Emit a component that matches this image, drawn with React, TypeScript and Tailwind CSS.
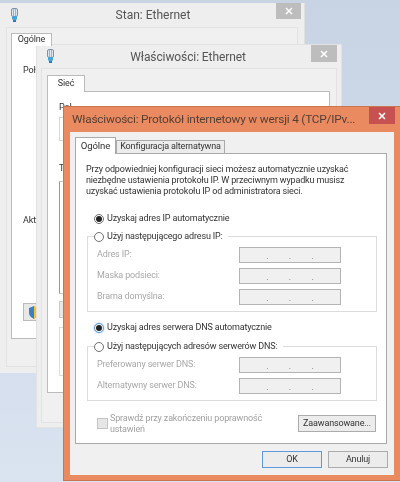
import React from "react";

const font = { fontFamily: 'Roboto, "Liberation Sans", sans-serif' };

function Plug({ className }: { className: string }) {
  return (
    <svg className={className} width="9" height="14" viewBox="0 0 9 14">
      <rect x="1.5" y="0.5" width="6" height="8" rx="1.5" fill="#dbe6ee" stroke="#7d93a6" />
      <rect x="3" y="1" width="1" height="7" fill="#9fb4c4" />
      <rect x="5" y="1" width="1" height="7" fill="#9fb4c4" />
      <rect x="2" y="8.5" width="5" height="3" fill="#3fa4e0" />
      <rect x="3" y="11.5" width="3" height="2.5" fill="#1c7fc4" />
    </svg>
  );
}

function CloseX({ className }: { className: string }) {
  return (
    <div className={className}>
      <svg width="8" height="8" viewBox="0 0 8 8">
        <path d="M1 1 L7 7 M7 1 L1 7" stroke="#ffffff" strokeWidth="1.6" />
      </svg>
    </div>
  );
}

function Radio({ on, active }: { on?: boolean; active?: boolean }) {
  return (
    <span
      className={`flex h-[10px] w-[10px] shrink-0 items-center justify-center rounded-full border bg-white ${
        active ? "border-[#5a9bd8] shadow-[0_0_2px_#7fb8ea]" : "border-[#6f6f6f]"
      }`}
    >
      {on ? <span className="h-[6px] w-[6px] rounded-full bg-[#222]" /> : null}
    </span>
  );
}

function IpRow({ label }: { label: string }) {
  return (
    <div className="flex h-[16px] items-center">
      <span className="w-[142px] whitespace-nowrap text-[#a8a8a8]">{label}</span>
      <div className="flex h-[16px] w-[102px] items-end justify-around border border-[#b4b4b4] bg-[#f0f0f0] px-[16px] pb-[2px] text-[#777] leading-[8px]">
        <span>.</span>
        <span>.</span>
        <span>.</span>
      </div>
    </div>
  );
}

export default function App() {
  return (
    <div
      className="relative h-[482px] w-[400px] overflow-hidden bg-gradient-to-b from-[#c8d3e4] to-[#dae3f0] text-[9px] tracking-[-0.15px] text-[#333] blur-[0.4px]"
      style={font}
    >
      {/* Stan: Ethernet */}
      <div className="absolute left-0 top-[3px] flex h-[370px] w-[305px] flex-col border-r border-[#e0e0e0] bg-[#eeeeee] px-[6px] pb-[6px]">
        <div className="flex h-[24px] shrink-0 items-center justify-center pl-[2px] text-[12px] tracking-normal text-[#555]">
          Stan: Ethernet
        </div>
        <Plug className="absolute left-[10px] top-[5px]" />
        <CloseX className="absolute left-[276px] top-0 flex h-[16px] w-[25px] items-center justify-center bg-[#bdbdbd]" />
        <div className="flex flex-1 flex-col border border-[#e2e2e2] bg-[#f0f0f0] px-[4px] pt-[5px]">
          <div className="z-10 -mb-px flex h-[13px] w-[41px] items-center justify-center border border-b-0 border-[#bbb] bg-white text-[#333]">
            Ogólne
          </div>
          <div className="flex h-[294px] flex-col border border-[#bbb] bg-white pl-[11px]">
            <span className="mt-[18px]">Poł</span>
            <span className="mt-[136px]">Akt</span>
            <div className="mt-[76px] flex h-[18px] w-[40px] items-center border border-[#bbb] bg-[#e8e8e8] pl-[5px]">
              <svg width="10" height="13" viewBox="0 0 10 13">
                <path d="M5 0 L10 2 V7 C10 10 7 12 5 13 Z" fill="#f2c531" />
                <path d="M5 0 L0 2 V7 C0 10 3 12 5 13 Z" fill="#3c7fc8" />
              </svg>
            </div>
          </div>
        </div>
      </div>

      {/* Właściwości: Ethernet */}
      <div className="absolute left-[36px] top-[44px] flex h-[384px] w-[306px] flex-col border border-[#e2e2e2] bg-[#eeeeee] px-[4px] pb-[4px]">
        <div className="flex h-[23px] shrink-0 items-center justify-center pr-[2px] text-[12px] tracking-[-0.1px] text-[#555]">
          Właściwości: Ethernet
        </div>
        <Plug className="absolute left-[9px] top-[4px]" />
        <CloseX className="absolute left-[274px] top-0 flex h-[17px] w-[26px] items-center justify-center bg-[#bdbdbd]" />
        <div className="flex flex-1 flex-col border border-[#e2e2e2] bg-[#f0f0f0] pl-[5px] pr-[6px] pt-[6px]">
          <div className="z-10 -mb-px flex h-[17px] w-[38px] items-center justify-center border border-b-0 border-[#bbb] bg-white">
            Sieć
          </div>
          <div className="flex h-[302px] flex-col border border-[#bbb] bg-white pl-[11px]">
            <span className="mt-[9px] h-[13px] whitespace-nowrap">Poł</span>
            <div className="mt-[3px] h-[24px] w-[250px] border border-[#d8d8d8]" />
            <span className="mt-[21px] h-[13px]">T</span>
            <div className="mt-[6px] h-[113px] w-[250px] border border-[#d0d0d0] border-l-[#999]" />
            <div className="mt-[7px] h-[17px] w-[60px] border border-[#ccc] bg-[#e8e8e8]" />
            <div className="mt-[9px] h-[49px] w-[250px] border border-[#ddd]" />
          </div>
        </div>
      </div>

      {/* Właściwości: Protokół */}
      <div className="absolute left-[63px] top-[106px] flex h-[375px] w-[337px] flex-col border border-[#c9764f] border-r-0 bg-[#e98a60] pb-[5px] pl-[6px] pr-[6px]">
        <div className="flex h-[25px] shrink-0 items-center whitespace-nowrap pl-[2px] text-[11.8px] tracking-[-0.2px] text-[#553f35]">
          Właściwości: Protokół internetowy w wersji 4 (TCP/IPv...
        </div>
        <CloseX className="absolute left-[305px] top-0 flex h-[17px] w-[26px] items-center justify-center bg-[#c75050]" />
        <div className="flex flex-1 flex-col bg-[#f0f0f0] pl-[5px] pr-[6px] pt-[5px]">
          <div className="flex h-[16px] items-end">
            <div className="z-10 -mb-px flex h-[17px] w-[41px] items-center justify-center border border-b-0 border-[#aaa] bg-white text-[9.6px]">
              Ogólne
            </div>
            <div className="flex h-[13px] w-[109px] items-center justify-center whitespace-nowrap border border-b-0 border-[#aaa] bg-[#ececec]">
              Konfiguracja alternatywna
            </div>
          </div>
          <div className="flex h-[291px] w-[312px] flex-col border border-[#aaa] bg-white pt-[10px]">
            <p className="whitespace-nowrap pl-[10px] leading-[11px]">
              Przy odpowiedniej konfiguracji sieci możesz automatycznie uzyskać
              <br />
              niezbędne ustawienia protokołu IP. W przeciwnym wypadku musisz
              <br />
              uzyskać ustawienia protokołu IP od administratora sieci.
            </p>

            <label className="ml-[18px] mt-[16px] flex h-[12px] items-center gap-[3px]">
              <Radio on />
              <span>Uzyskaj adres IP automatycznie</span>
            </label>

            <div className="relative ml-[11px] mt-[11px] flex h-[76px] w-[290px] flex-col gap-[5px] border border-[#dcdcdc] pl-[9px] pt-[10px]">
              <label className="absolute -top-[6px] left-[6px] flex h-[12px] items-center gap-[3px] bg-white pr-[5px]">
                <Radio />
                <span>Użyj następującego adresu IP:</span>
              </label>
              <IpRow label="Adres IP:" />
              <IpRow label="Maska podsieci:" />
              <IpRow label="Brama domyślna:" />
            </div>

            <label className="ml-[18px] mt-[10px] flex h-[12px] items-center gap-[3px]">
              <Radio on active />
              <span>Uzyskaj adres serwera DNS automatycznie</span>
            </label>

            <div className="relative ml-[11px] mt-[12px] flex h-[55px] w-[290px] flex-col gap-[5px] border border-[#dcdcdc] pl-[9px] pt-[10px]">
              <label className="absolute -top-[6px] left-[6px] flex h-[12px] items-center gap-[3px] bg-white pr-[5px]">
                <Radio />
                <span>Użyj następujących adresów serwerów DNS:</span>
              </label>
              <IpRow label="Preferowany serwer DNS:" />
              <IpRow label="Alternatywny serwer DNS:" />
            </div>

            <div className="ml-[21px] mt-[14px] flex h-[17px] w-[279px] items-center justify-between">
              <div className="flex items-center gap-[2px]">
                <span className="h-[11px] w-[11px] shrink-0 border border-[#c4c4c4] bg-[#e6e6e6]" />
                <span className="whitespace-nowrap leading-[11px] text-[#a0a0a0]">
                  Sprawdź przy zakończeniu poprawność
                  <br />
                  ustawień
                </span>
              </div>
              <button className="flex h-[17px] w-[78px] items-center justify-center whitespace-nowrap border border-[#acacac] bg-[#ececec] text-[#333]">
                Zaawansowane...
              </button>
            </div>
          </div>
          <div className="mt-[7px] flex justify-end gap-[6px]">
            <button className="h-[17px] w-[60px] border border-[#5a9bd8] bg-[#ececec]">OK</button>
            <button className="h-[17px] w-[60px] border border-[#acacac] bg-[#ececec]">Anuluj</button>
          </div>
        </div>
      </div>
    </div>
  );
}
